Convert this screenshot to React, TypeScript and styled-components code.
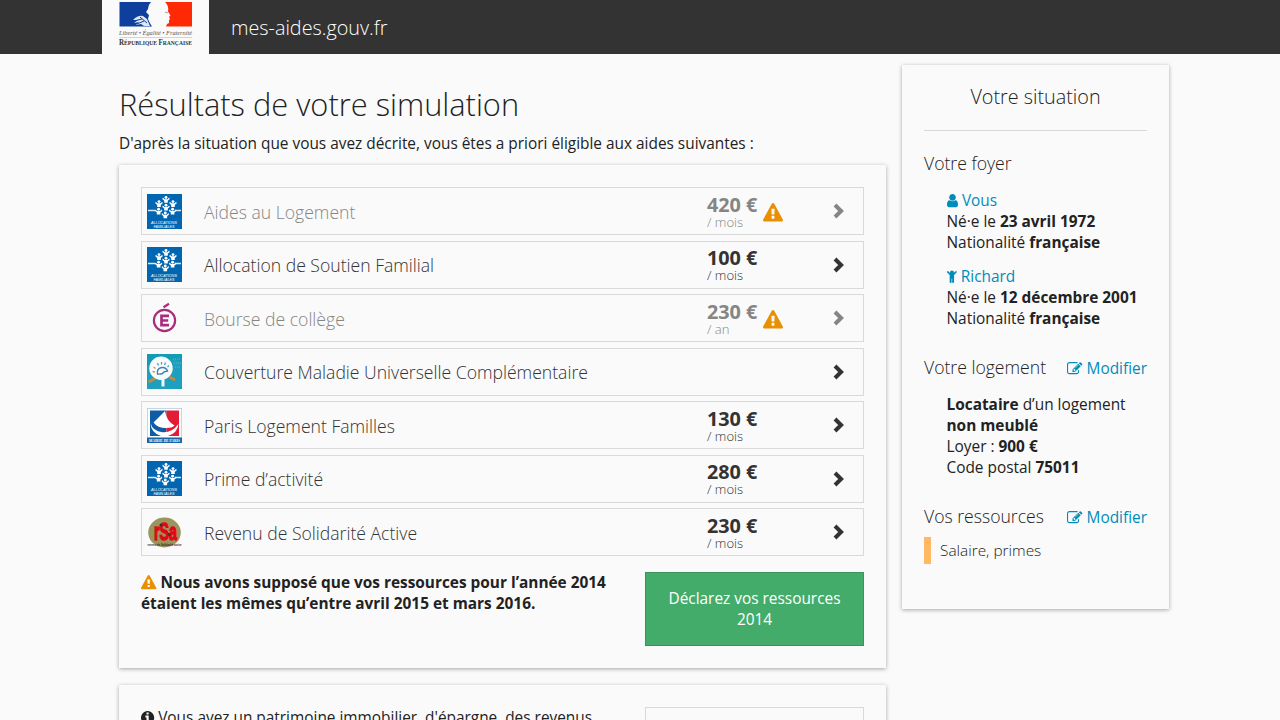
import React from "react";
import styled, { createGlobalStyle } from "styled-components";

const Global = createGlobalStyle`
  * { box-sizing: border-box; }
  body {
    margin: 0;
    background: #fafafa;
    color: #222;
    font: 400 15.4px/21px "Open Sans", "Noto Sans", sans-serif;
  }
  h1, h2, h3, p { margin: 0; font-weight: 300; }
  strong { font-weight: 700; }
  svg { display: block; flex: none; overflow: visible; }
`;

const Page = styled.div`
  height: 720px;
  overflow: hidden;
`;

const Header = styled.header`
  height: 54px;
  padding-left: 102px;
  display: flex;
  background: #333;
`;

const LogoBlock = styled.div`
  width: 107px;
  padding-left: 17px;
  background: #fafafa;
`;

const SiteName = styled.span`
  margin-left: 22px;
  padding-top: 14px;
  font-size: 19.8px;
  font-weight: 300;
  line-height: 28px;
  color: #fff;
`;

const Columns = styled.div`
  display: flex;
  align-items: flex-start;
  gap: 16px;
  padding-left: 119px;
`;

const Main = styled.main`
  width: 767px;
  padding-top: 28px;
`;

const PageTitle = styled.h1`
  font-size: 30.8px;
  line-height: 44px;
`;

const Intro = styled.p`
  margin-top: 7px;
  font-weight: 400;
`;

const Card = styled.section`
  margin-top: 11px;
  padding: 22px;
  background: #fafafa;
  box-shadow: 0 1px 4px rgba(0, 0, 0, 0.34);
  & + & { margin-top: 17px; }
`;

const AidList = styled.div`
  display: flex;
  flex-direction: column;
  gap: 5.5px;
`;

const Row = styled.div<{ $muted?: boolean }>`
  display: flex;
  align-items: center;
  height: 48px;
  padding: 0 18px 0 5px;
  border: 1px solid #d9d9d9;
  color: ${(p) => (p.$muted ? "#858585" : "#333")};
`;

const RowLabel = styled.span`
  flex: 1;
  margin-left: 22px;
  padding-top: 2px;
  font-size: 17.6px;
  line-height: 25px;
  font-weight: 300;
`;

const AmountCell = styled.div`
  width: 126px;
  display: flex;
  align-items: center;
  gap: 6px;
  padding-top: 2px;
  svg { margin-top: 1px; }
`;

const Amount = styled.div`
  display: flex;
  flex-direction: column;
`;

const Value = styled.strong`
  font-size: 19.8px;
  line-height: 20px;
`;

const Period = styled.span`
  font-size: 13.1px;
  line-height: 15px;
  font-weight: 300;
`;

const Notice = styled.div<{ $top?: number }>`
  display: flex;
  justify-content: space-between;
  align-items: flex-start;
  margin-top: ${(p) => p.$top ?? 0}px;
`;

const NoticeText = styled.p<{ $bold?: boolean }>`
  width: 480px;
  font-weight: ${(p) => (p.$bold ? 700 : 400)};
  svg { display: inline-block; vertical-align: -2px; margin-right: 4px; }
`;

const Button = styled.button<{ $green?: boolean }>`
  width: 219px;
  height: 74px;
  padding: 0 20px;
  border: 1px solid ${(p) => (p.$green ? "#3b945e" : "#d9d9d9")};
  background: ${(p) => (p.$green ? "#43ac6a" : "#fafafa")};
  color: #fff;
  font: inherit;
`;

const Side = styled.aside`
  width: 267px;
  height: 544px;
  margin-top: 11px;
  padding: 18px 22px;
  background: #fafafa;
  box-shadow: 0 1px 4px rgba(0, 0, 0, 0.34);
`;

const SideTitle = styled.h2`
  padding-bottom: 19px;
  border-bottom: 1px solid #d9d9d9;
  text-align: center;
  font-size: 19.8px;
  line-height: 28px;
`;

const SideHead = styled.div<{ $top: number }>`
  display: flex;
  justify-content: space-between;
  align-items: center;
  margin-top: ${(p) => p.$top}px;
`;

const SideHeading = styled.h3`
  font-size: 17.6px;
  line-height: 25px;
`;

const Accent = styled.span`
  display: flex;
  align-items: center;
  gap: 4.4px;
  color: #008cba;
`;

const EditAnchor = styled(Accent)`
  padding-top: 2px;
`;

const Details = styled.div<{ $top: number }>`
  margin-top: ${(p) => p.$top}px;
  padding-left: 22.5px;
  p { font-weight: 400; }
`;

const Resource = styled.div`
  height: 27px;
  margin-top: 8px;
  padding-left: 9px;
  border-left: 7px solid #ffb964;
  font-weight: 300;
  line-height: 27px;
`;

const glyphs = {
  user: "M1536 1399q0 109-62.5 187t-150.5 78h-854q-88 0-150.5-78t-62.5-187q0-85 8.5-160.5t31.5-152 58.5-131 94-89 134.5-34.5q131 128 313 128t313-128q76 0 134.5 34.5t94 89 58.5 131 31.5 152 8.5 160.5zm-256-887q0 159-112.5 271.5t-271.5 112.5-271.5-112.5-112.5-271.5 112.5-271.5 271.5-112.5 271.5 112.5 112.5 271.5z",
  child: "M1436 412l-292 292v824q0 46-33 79t-79 33-79-33-33-79v-384h-64v384q0 46-33 79t-79 33-79-33-33-79v-824l-292-292q-28-28-28-68t28-68q29-28 68.5-28t67.5 28l228 228h368l228-228q28-28 68-28t68 28q28 29 28 68.5t-28 67.5zm-316-28q0 93-65.5 158.5t-158.5 65.5-158.5-65.5-65.5-158.5 65.5-158.5 158.5-65.5 158.5 65.5 65.5 158.5z",
  edit: "M888 1184l116-116-152-152-116 116v56h96v96h56zm440-720q-16-16-33 1l-350 350q-17 17-1 33t33-1l350-350q17-17 1-33zm80 594v190q0 119-84.5 203.5t-203.5 84.5h-832q-119 0-203.5-84.5t-84.5-203.5v-832q0-119 84.5-203.5t203.5-84.5h832q63 0 117 25 15 7 18 23 3 17-9 29l-49 49q-14 14-32 8-23-6-45-6h-832q-66 0-113 47t-47 113v832q0 66 47 113t113 47h832q66 0 113-47t47-113v-126q0-13 9-22l64-64q15-15 35-7t20 29zm-96-738l288 288-672 672h-288v-288zm444 132l-92 92-288-288 92-92q28-28 68-28t68 28l152 152q28 28 28 68t-28 68z",
  warning: "M1024 1375v-190q0-14-9.5-23.5t-22.5-9.5h-192q-13 0-22.5 9.5t-9.5 23.5v190q0 14 9.5 23.5t22.5 9.5h192q13 0 22.5-9.5t9.5-23.5zm-2-374l18-459q0-12-10-19-13-11-24-11h-220q-11 0-24 11-10 7-10 21l17 457q0 10 10 16.5t24 6.5h185q14 0 23.5-6.5t10.5-16.5zm-14-934l768 1408q35 63-2 126-17 29-46.5 46t-63.5 17h-1536q-34 0-63.5-17t-46.5-46q-37-63-2-126l768-1408q17-31 47-49t65-18 65 18 47 49z",
  info: "M1152 1376v-160q0-14-9-23t-23-9h-96v-512q0-14-9-23t-23-9h-320q-14 0-23 9t-9 23v160q0 14 9 23t23 9h96v320h-96q-14 0-23 9t-9 23v160q0 14 9 23t23 9h448q14 0 23-9t9-23zm-128-896v-160q0-14-9-23t-23-9h-192q-14 0-23 9t-9 23v160q0 14 9 23t23 9h192q14 0 23-9t9-23zm640 416q0 209-103 385.5t-279.5 279.5-385.5 103-385.5-103-279.5-279.5-103-385.5 103-385.5 279.5-279.5 385.5-103 385.5 103 279.5 279.5 103 385.5z",
};

type GlyphName = keyof typeof glyphs;

/* Each glyph is cropped horizontally to its own advance width: [x, width]. */
const bounds: Record<GlyphName, [number, number]> = {
  user: [256, 1280],
  child: [320, 1152],
  edit: [0, 1792],
  warning: [0, 1792],
  info: [128, 1536],
};

function Glyph({ name, size = 15.4, color = "currentColor" }: { name: GlyphName; size?: number; color?: string }) {
  const [x, w] = bounds[name];
  return (
    <svg width={(size * w) / 1792} height={size} viewBox={`${x} 0 ${w} 1792`} fill={color}>
      <path d={glyphs[name]} />
    </svg>
  );
}

function Chevron() {
  return (
    <svg width="12" height="16" viewBox="0 0 12 16">
      <path d="M2 2l6.100 6L2 14" fill="none" stroke="currentColor" strokeWidth="4" />
    </svg>
  );
}

function RepublicLogo() {
  return (
    <svg width="74" height="48" viewBox="0 0 74 48">
      <path d="M.5 2H32q-3 3-3 7l-2 3 3 3-1 4q2 5 4 7.500H.5z" fill="#0f3f9c" />
      <path d="M46 2h27v24.500H47l1-2.500 2-1v-3l1-1-1-2 1.500-1.500-2.500-4q1-6-3-9.500z" fill="#ff2a05" />
      <path d="M14 20q5-5 10-4l4 3 3 7h-6l-3-2-5 1 3-3-5 1 4-3z" fill="#dfe6f3" />
      <path d="M15 21l8-2M18 24l7-3M21 17l7 6" stroke="#0f3f9c" strokeWidth="1" fill="none" />
      <path d="M46 12.500q2-.5 3 .5" stroke="#888" fill="none" strokeWidth=".8" />
      <text x="0" y="35" textLength="73" lengthAdjust="spacingAndGlyphs" fontFamily="Liberation Serif, serif" fontStyle="italic" fontSize="6.500" fill="#555">Liberté • Égalité • Fraternité</text>
      <path d="M.5 37.500h72.500" stroke="#bbb" strokeWidth=".6" />
      <text x="0" y="45" textLength="73" lengthAdjust="spacingAndGlyphs" fontFamily="Liberation Serif, serif" fontWeight="700" fontSize="6" fill="#333">
        <tspan fontSize="7.500">R</tspan>ÉPUBLIQUE <tspan fontSize="7.500">F</tspan>RANÇAISE
      </text>
    </svg>
  );
}

const family: [number, number][] = [
  [19, 3.5], [12, 7.6], [26, 7.6], [19, 11.3], [11.6, 15.3], [25.6, 15.3], [18.3, 19],
];

function FamilyLogo() {
  return (
    <svg width="35" height="35" viewBox="0 0 35 35">
      <rect width="35" height="35" fill="#0066b2" />
      <path d="M1 16.500h7M28 16.500h6" stroke="#fff" strokeWidth="1.500" opacity=".85" />
      {family.map(([x, y]) => (
        <g key={`${x}-${y}`} fill="#fff">
          <circle cx={x} cy={y} r="1.450" />
          <path d={`M${x - 3.2} ${y + 0.1}l1.700 1.600h3l1.700-1.600 .5 1.500-1.900 1.700v2h-3.600v-2l-1.900-1.700z`} />
        </g>
      ))}
      <text x="4" y="29.500" textLength="26" lengthAdjust="spacingAndGlyphs" fontFamily="Liberation Sans, sans-serif" fontStyle="italic" fontSize="3.600" fill="#fff">ALLOCATIONS</text>
      <text x="6.500" y="33.500" textLength="21" lengthAdjust="spacingAndGlyphs" fontFamily="Liberation Sans, sans-serif" fontStyle="italic" fontSize="3.600" fill="#fff">FAMILIALES</text>
    </svg>
  );
}

function EducationLogo() {
  return (
    <svg width="35" height="35" viewBox="0 0 35 35" fill="none" stroke="#aa2c7c">
      <circle cx="17.500" cy="19.500" r="10.600" strokeWidth="2.200" />
      <path d="M22 14.800h-7.500v9.400H22M14.500 19.500h6.700" strokeWidth="2.700" />
      <path d="M16.500 6.200l5.500-3.500" strokeWidth="2.200" />
    </svg>
  );
}

function HealthLogo() {
  return (
    <svg width="35" height="35" viewBox="0 0 35 35" fill="none">
      <rect width="35" height="35" fill="#1d9fbd" />
      <path d="M0 0h35v8q-18-8-35 4z" fill="#129bb5" />
      <path d="M26 5h8M27 9h7M28 13h6" stroke="#58bccf" strokeWidth="1" strokeDasharray="1 1" />
      <path d="M8 24.500L1.500 28M22.500 23l5.500 3" stroke="#c48a45" strokeWidth="3" />
      <path d="M16 25v7.500" stroke="#f1f7fa" strokeWidth="3" />
      <circle cx="14" cy="14.300" r="11.700" fill="#f8fbfc" />
      <path d="M10.500 20q-1-5.500 4-6.500 4.500-.5 6 3.500-4 .5-5 2.500-2.500 1-5 .5z" stroke="#3f7fb0" strokeWidth="1.400" />
      <path d="M8 18l-2.500-.5M8.500 14.500L6.500 13" stroke="#c9a046" strokeWidth="1.400" />
      <path d="M11.500 11.500L10.500 9M14.500 10.500V8M17.500 11l1-2.500M20.500 13l1.500-1.500" stroke="#4aa3cc" strokeWidth="1.300" />
    </svg>
  );
}

function ParisLogo() {
  return (
    <svg width="35" height="35" viewBox="0 0 35 35">
      <rect x=".3" y=".3" width="34.400" height="34.400" fill="#fff" stroke="#9fbdd4" strokeWidth=".6" />
      <path d="M3 2.500h16.500V28H3z" fill="#0d5ca5" />
      <path d="M19.500 2.500H32V28H19.500z" fill="#e41b35" />
      <path d="M18 3L6.500 14.500q4 5.500 12.500 5.500 6.500 0 8.500-2.500Q19.500 13 18 3z" fill="#fff" />
      <path d="M3.500 15q2 8 12 9.300Q25 25 31.500 16q-1 9-10.500 12h-7Q4 25 3.500 15z" fill="#fff" />
      <rect y="29.500" width="35" height="5.500" fill="#1764a7" />
      <text x="2" y="33.700" textLength="31" lengthAdjust="spacingAndGlyphs" fontFamily="Liberation Serif, serif" fontWeight="700" fontSize="4" fill="#fff">MAIRIE DE PARIS</text>
    </svg>
  );
}

function RsaLogo() {
  return (
    <svg width="35" height="35" viewBox="0 0 35 35">
      <ellipse cx="17.500" cy="17.500" rx="16.300" ry="15" fill="#99955c" />
      <text x="7" y="24.500" textLength="23" lengthAdjust="spacingAndGlyphs" fontFamily="Liberation Sans, sans-serif" fontWeight="700" fontSize="23" fill="#e30613" stroke="#e30613" strokeWidth="1.300">rSa</text>
      <circle cx="14" cy="10" r="1.500" fill="#333" />
      <circle cx="22" cy="19.500" r="1.300" fill="#333" />
      <text x=".5" y="30.500" textLength="34" lengthAdjust="spacingAndGlyphs" fontFamily="Liberation Sans, sans-serif" fontWeight="700" fontSize="3.600" fill="#3b2730">revenu de Solidarité active</text>
    </svg>
  );
}

interface Aid {
  label: string;
  Logo: () => React.JSX.Element;
  value?: string;
  period?: string;
  estimated?: boolean;
}

const aids: Aid[] = [
  { label: "Aides au Logement", Logo: FamilyLogo, value: "420 €", period: "/ mois", estimated: true },
  { label: "Allocation de Soutien Familial", Logo: FamilyLogo, value: "100 €", period: "/ mois" },
  { label: "Bourse de collège", Logo: EducationLogo, value: "230 €", period: "/ an", estimated: true },
  { label: "Couverture Maladie Universelle Complémentaire", Logo: HealthLogo },
  { label: "Paris Logement Familles", Logo: ParisLogo, value: "130 €", period: "/ mois" },
  { label: "Prime d’activité", Logo: FamilyLogo, value: "280 €", period: "/ mois" },
  { label: "Revenu de Solidarité Active", Logo: RsaLogo, value: "230 €", period: "/ mois" },
];

function AidRow({ label, Logo, value, period, estimated }: Aid) {
  return (
    <Row $muted={estimated}>
      <Logo />
      <RowLabel>{label}</RowLabel>
      <AmountCell>
        {value && (
          <Amount>
            <Value>{value}</Value>
            <Period>{period}</Period>
          </Amount>
        )}
        {estimated && <Glyph name="warning" size={20} color="#e99002" />}
      </AmountCell>
      <Chevron />
    </Row>
  );
}

function EditLink() {
  return (
    <EditAnchor>
      <Glyph name="edit" />
      Modifier
    </EditAnchor>
  );
}

export default function App() {
  return (
    <Page>
      <Global />
      <Header>
        <LogoBlock>
          <RepublicLogo />
        </LogoBlock>
        <SiteName>mes-aides.gouv.fr</SiteName>
      </Header>
      <Columns>
        <Main>
          <PageTitle>Résultats de votre simulation</PageTitle>
          <Intro>D'après la situation que vous avez décrite, vous êtes a priori éligible aux aides suivantes :</Intro>
          <Card>
            <AidList>
              {aids.map((aid) => (
                <AidRow key={aid.label} {...aid} />
              ))}
            </AidList>
            <Notice $top={16}>
              <NoticeText $bold>
                <Glyph name="warning" color="#e99002" />
                Nous avons supposé que vos ressources pour l’année 2014 étaient les mêmes qu’entre avril 2015 et mars 2016.
              </NoticeText>
              <Button $green>Déclarez vos ressources 2014</Button>
            </Notice>
          </Card>
          <Card>
            <Notice>
              <NoticeText>
                <Glyph name="info" />
                Vous avez un patrimoine immobilier, d'épargne, des revenus
              </NoticeText>
              <Button />
            </Notice>
          </Card>
        </Main>
        <Side>
          <SideTitle>Votre situation</SideTitle>
          <SideHead $top={20}>
            <SideHeading>Votre foyer</SideHeading>
          </SideHead>
          <Details $top={14}>
            <Accent>
              <Glyph name="user" />
              Vous
            </Accent>
            <p>Né·e le <strong>23 avril 1972</strong></p>
            <p>Nationalité <strong>française</strong></p>
          </Details>
          <Details $top={13}>
            <Accent>
              <Glyph name="child" />
              Richard
            </Accent>
            <p>Né·e le <strong>12 décembre 2001</strong></p>
            <p>Nationalité <strong>française</strong></p>
          </Details>
          <SideHead $top={26}>
            <SideHeading>Votre logement</SideHeading>
            <EditLink />
          </SideHead>
          <Details $top={14}>
            <p><strong>Locataire</strong> d’un logement <strong>non meublé</strong></p>
            <p>Loyer : <strong>900 €</strong></p>
            <p>Code postal <strong>75011</strong></p>
          </Details>
          <SideHead $top={26}>
            <SideHeading>Vos ressources</SideHeading>
            <EditLink />
          </SideHead>
          <Resource>Salaire, primes</Resource>
        </Side>
      </Columns>
    </Page>
  );
}
